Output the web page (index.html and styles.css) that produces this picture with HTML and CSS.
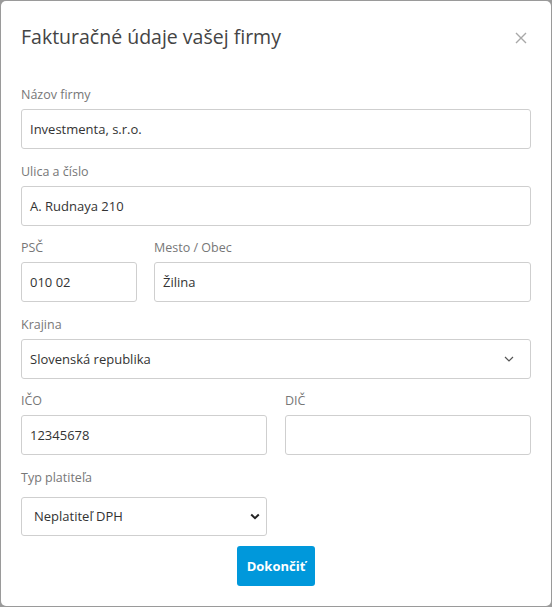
FILE: index.html
```html
<!DOCTYPE html>
<html lang="sk">
<head>
<meta charset="utf-8">
<title>Fakturačné údaje vašej firmy</title>
<link rel="stylesheet" href="styles.css">
</head>
<body>
<div class="modal">
  <div class="modal-header">
    <h1 class="modal-title">Fakturačné údaje vašej firmy</h1>
    <button class="close" type="button" aria-label="Zavrieť">
      <svg width="12" height="12" viewBox="0 0 12 12"><path d="M1 1 L11 11 M11 1 L1 11" stroke="#a8a8a8" stroke-width="1.4" fill="none"/></svg>
    </button>
  </div>
  <form class="modal-body">
    <div class="field">
      <label class="label">Názov firmy</label>
      <div class="input">Investmenta, s.r.o.</div>
    </div>
    <div class="field">
      <label class="label">Ulica a číslo</label>
      <div class="input">A. Rudnaya 210</div>
    </div>
    <div class="row row-psc">
      <div class="field">
        <label class="label">PSČ</label>
        <div class="input">010 02</div>
      </div>
      <div class="field">
        <label class="label">Mesto / Obec</label>
        <div class="input">Žilina</div>
      </div>
    </div>
    <div class="field">
      <label class="label">Krajina</label>
      <div class="input select-soft">
        <span>Slovenská republika</span>
        <svg class="chev" width="10" height="6" viewBox="0 0 10 6"><path d="M1 1 L5 5 L9 1" stroke="#555" stroke-width="1.2" fill="none"/></svg>
      </div>
    </div>
    <div class="row row-half">
      <div class="field">
        <label class="label">IČO</label>
        <div class="input">12345678</div>
      </div>
      <div class="field">
        <label class="label">DIČ</label>
        <div class="input"></div>
      </div>
    </div>
    <div class="row row-half">
      <div class="field field-typ">
        <label class="label">Typ platiteľa</label>
        <div class="input select-native">
          <span>Neplatiteľ DPH</span>
          <svg class="chev-bold" width="10" height="7" viewBox="0 0 10 7"><path d="M1.2 1.5 L5 5.2 L8.8 1.5" stroke="#222" stroke-width="2" fill="none"/></svg>
        </div>
      </div>
    </div>
    <div class="actions">
      <button class="btn" type="button">Dokončiť</button>
    </div>
  </form>
</div>
</body>
</html>
```
FILE: styles.css
```css
html, body {
  margin: 0;
  padding: 0;
}
body {
  background: #9a9a9a;
  width: 552px;
  height: 607px;
  overflow: hidden;
  font-family: "Open Sans", "Liberation Sans", sans-serif;
}
.modal {
  margin: 1px;
  width: 550px;
  height: 605px;
  box-sizing: border-box;
  background: #fff;
  border-radius: 5px;
  padding: 0 20px;
}
.modal-header {
  display: flex;
  justify-content: space-between;
  align-items: flex-start;
  height: 84px;
  box-sizing: border-box;
  padding-top: 21px;
}
.modal-title {
  margin: 0;
  font-size: 19.5px;
  line-height: 30px;
  font-weight: 500;
  color: #444;
}
.close {
  border: 0;
  background: none;
  padding: 0;
  margin-top: 10px;
  margin-right: 4px;
  display: flex;
}
.modal-body {
  display: flex;
  flex-direction: column;
  gap: 12.5px;
}
.field {
  display: flex;
  flex-direction: column;
}
.label {
  font-size: 12.5px;
  line-height: 20px;
  color: #777;
  margin-bottom: 4px;
}
.input {
  height: 40px;
  box-sizing: border-box;
  border: 1px solid #cfcfcf;
  border-radius: 3px;
  padding: 0 8px;
  font-size: 13px;
  color: #333;
  display: flex;
  align-items: center;
  justify-content: space-between;
}
.row {
  display: grid;
  gap: 17px;
}
.row-psc {
  grid-template-columns: 116px 1fr;
}
.row-half {
  grid-template-columns: 1fr 1fr;
  gap: 18px;
}
.field-typ .label {
  margin-bottom: 9px;
}
.select-soft {
  padding-right: 16px;
}
.select-native {
  height: 39px;
  padding-left: 12px;
  padding-right: 6px;
}
.actions {
  display: flex;
  justify-content: center;
  margin-top: -2px;
}
.btn {
  width: 78px;
  height: 40px;
  border: 0;
  border-radius: 3px;
  background: #0098db;
  color: #fff;
  font-family: inherit;
  font-weight: 700;
  font-size: 13px;
  padding: 0;
}
```
